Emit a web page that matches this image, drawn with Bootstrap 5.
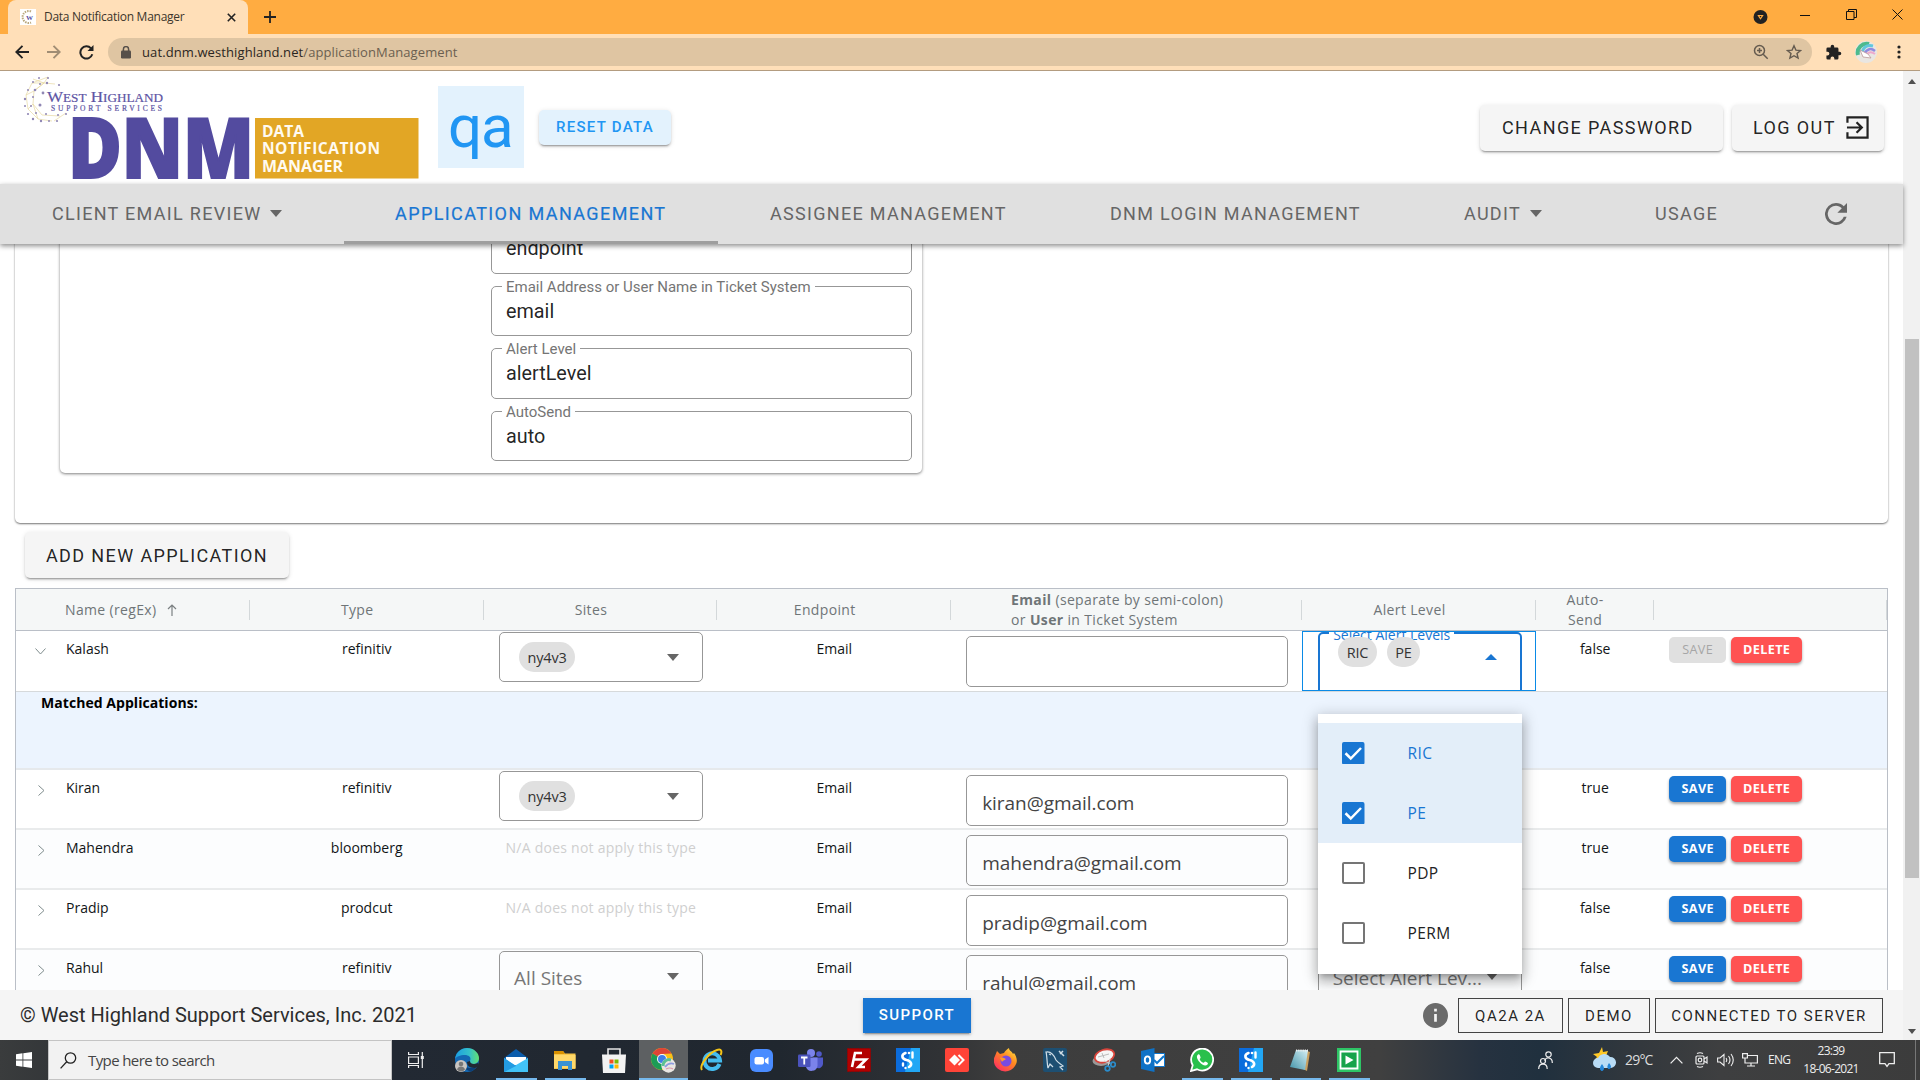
<!DOCTYPE html>
<html lang="en">
<head>
<meta charset="utf-8">
<title>Data Notification Manager</title>
<link href="https://cdn.jsdelivr.net/npm/bootstrap@5.3.0/dist/css/bootstrap.min.css" rel="stylesheet">
<style>
body{height:1080px;overflow:hidden;font-family:Roboto,sans-serif;background:#fff;color:rgba(0,0,0,.87);line-height:1.2}
svg{display:block;flex-shrink:0}
.ui-sans{font-family:"Open Sans","Noto Sans",sans-serif}
/* browser chrome */
.tabstrip{height:34px;background:#ffac41;padding-left:8px}
.tabitem{width:240px;height:34px;background:#ffdfb8;border-radius:8px 8px 0 0;padding:0 12px;font-size:12px;letter-spacing:-.27px;color:#3c352b}
.toolbar{height:37px;background:#ffdfb8;border-bottom:1px solid #b39c80}
.omni{height:28px;margin-left:14px;width:1704px;border-radius:14px;background:#dfc5a2;padding:0 12px 0 12px;font-size:13px;color:#6b5f50;letter-spacing:.1px}
/* application header */
.page{width:1903px}
.apphead{height:113px}
.qabox{width:86px;height:82px;background:#e3f2fd;color:#2196f3;font-size:60px;line-height:81px;letter-spacing:-1px;margin:-2px 0 0 8px;padding-left:10px}
.mbtn{border:0;border-radius:5px;background:#f5f5f5;color:rgba(0,0,0,.87);font-weight:400;font-size:18px;letter-spacing:1.4px;white-space:nowrap;box-shadow:0 3px 1px -2px rgba(0,0,0,.2),0 2px 2px rgba(0,0,0,.14),0 1px 5px rgba(0,0,0,.12);line-height:1}
.reset{width:132px;height:35px;background:#e3f2fd;color:#2196f3;font-size:15px;margin-left:15px;font-weight:500;letter-spacing:1.27px}
.appnav{height:60px;background:#e0e0e0;position:relative;z-index:3;box-shadow:0 2px 5px rgba(0,0,0,.45)}
.ntab{height:60px;padding-left:52px;font-size:18px;letter-spacing:1.3px;color:#666;white-space:nowrap;border-bottom:3px solid transparent;padding-top:2px}
.ntab.on{color:#1976d2;letter-spacing:1.4px;border-color:#9e9e9e;-webkit-text-stroke:.2px #1976d2;padding-left:51px}
.caret-d,.caret-u{width:0;height:0;border-left:6px solid transparent;border-right:6px solid transparent}
.caret-d{border-top:7px solid #666}
.caret-u{border-bottom:6px solid #1976d2}
/* content */
.content{height:746px;overflow:hidden;position:relative}
.outer{margin:-44px 15px 0;height:323px;border-radius:5px;background:#fff;box-shadow:0 1px 2px rgba(0,0,0,.55)}
.inner{margin-left:45px;width:862px;height:273px;border-radius:5px;box-shadow:0 1px 3px rgba(0,0,0,.5);padding:23px 10px 0 431px;gap:12px}
.field{height:50.6px;border:1px solid #979797;border-radius:5px;padding:12px 0 0 14px;font-size:19.8px;line-height:26px;position:relative;width:421px}
.flabel{position:absolute;top:-10px;left:10px;background:#fff;padding:0 4px;font-size:15px;line-height:20px;color:#757575}
.addbtn{width:264px;height:46px;margin:9px 0 10px 25px;padding-top:3px}
/* data grid */
.dgrid{margin:0 15px;border:1px solid #babfc7;border-bottom:0;font-size:14px;width:1873px;color:#111517}
.dhead{height:42px;background:#f5f7f7;color:#6f7577;border-bottom:1px solid #babfc7;letter-spacing:.35px;line-height:20px}
.dhead>div{position:relative;display:flex;align-items:center;height:41px}
.dhead>div::after{content:"";position:absolute;right:0;top:11px;height:20px;width:1px;background:#d3d8da}
.c1,.c2,.c3,.c4{width:233.8px}.c5{width:351px}.c6{width:234px}.c7{width:118px}.c8{width:233px}
.drow{height:60px;border-bottom:2px solid #e9ebec;line-height:20px}
.drow>div{padding-top:8px;flex-shrink:0}
.drow.first{height:61px;border-bottom:1px solid #d6d9db}
.drow.odd{background:#fcfdfe}
.detail{height:78px;background:#ecf4fe;border-bottom:2px solid #e6e9ec;padding:1px 0 0 25px;font-weight:700;line-height:20px;color:#000;letter-spacing:.05px}
.selbox{width:204px;height:50px;border:1px solid #979797;border-radius:5px;margin-left:15.5px;padding:0 23px 0 19px;background:#fff}
.odd .selbox,.odd .inbox{background:#fcfdfe}
.chipx{height:30px;border-radius:15px;background:#e0e0e0;padding:0 8.500px;line-height:31px;font-size:14.5px;letter-spacing:-.2px;color:#333}
.inbox{width:322px;height:51px;border:1px solid #979797;border-radius:5px;margin-left:15px;padding:15px 0 0 15px;font-size:19px;line-height:24px;letter-spacing:-.05px;color:#444;background:#fff}
.drow>.p1{padding-top:1px}.drow>.p5{padding-top:5px}.drow>.p6{padding-top:6px}
.na{color:#cfcfcf;letter-spacing:.24px;padding-left:22px}
.abtn{height:25.5px;border:0;border-radius:5px;color:#fff;font-size:12.6px;font-weight:700;line-height:1;padding:1px 0 0;letter-spacing:.4px;box-shadow:0 2px 3px rgba(0,0,0,.35)}
.asave{width:57px;background:#1976d2;margin-left:15px}.adel{width:71px;background:#ff5252;margin-left:5px}
.asave.off{background:#e0e0e0;color:#a6a6a6;box-shadow:none;font-weight:400}
.focuscell{border:1px solid #0a8ae6;height:60px;width:234px;overflow:hidden}
.alertbox{position:relative;width:204px;height:70px;margin-left:15px;border:2px solid #1976d2;border-radius:5px}
.alabel{position:absolute;left:9px;top:-9px;background:#fff;padding:0 4px;font-size:14px;line-height:20px;color:#1976d2;white-space:nowrap}
.menu{position:absolute;left:1318px;top:470px;width:204px;height:260px;background:#fff;box-shadow:0 5px 5px -3px rgba(0,0,0,.2),0 8px 10px 1px rgba(0,0,0,.14),0 3px 14px 2px rgba(0,0,0,.2);padding-top:9px;z-index:2;font-size:15.5px;letter-spacing:.4px;color:#222}
.mitem{height:60px;padding-left:24px;gap:43px}
.mitem.sel{background:#e3eef9;color:#1976d2}
.cbx{width:22.5px;height:22.5px;border:2px solid #757575;border-radius:2px}
/* footer */
.foot{height:50px;background:#f5f5f5;padding:0 20px}
.support{position:absolute;left:863px;top:8px;width:108px;height:35px;border-radius:0;background:#1976d2;color:#fff;font-size:15px;letter-spacing:1.4px;font-weight:500}
.fbtn{height:35px;border:1px solid #222;outline:.5px solid #444;outline-offset:-1px;font-size:15px;font-weight:400;letter-spacing:1.5px;line-height:34px;text-align:center}
.track{width:17px;background:#f1f1f1;padding:8px 2px 9px}
.thumb{background:#c1c1c1;height:539px;margin-top:255px;width:14px}
/* taskbar */
.task{height:40px;background:linear-gradient(90deg,#3a3c3d 0,#343739 48px,#222933 392px,#20272f 780px,#303235 940px,#3d3d3d 1000px,#404040 1380px,#263240 1480px,#20303e 1540px,#33383d 1640px,#3e3f40 1720px,#3c3c3c 1920px);color:#eee}
.tsearch{width:344px;height:40px;background:#f2f2f2;border:1px solid #c4c4c4;color:#444;font-size:15px;letter-spacing:-.6px;padding-left:11px}
.tico{width:49px;height:40px}
.tico.run{border-bottom:2px solid #76b9ed;width:41px;margin:0 4px;padding-top:2px}
.tico.act{border-bottom:2px solid #76b9ed;background:#5d6062;padding-top:2px}
</style>
<script src="https://cdn.jsdelivr.net/npm/bootstrap@5.3.0/dist/js/bootstrap.bundle.min.js"></script>
</head>
<body class="d-flex flex-column">

<div class="tabstrip d-flex align-items-center ui-sans">
  <div class="tabitem d-flex align-items-center">
    <svg width="16" height="16" viewBox="0 0 16 16"><rect width="16" height="16" fill="#fff"/><path d="M11 2.5A6 6 0 1 0 11 13.5" fill="none" stroke="#b9a77c" stroke-width="2" stroke-dasharray="1.5 1"/><text x="6" y="10.5" font-size="7" font-family="Liberation Serif" font-weight="700" fill="#534a9f">W</text></svg>
    <span class="ms-2 flex-fill text-nowrap">Data Notification Manager</span>
    <svg width="9" height="9" viewBox="0 0 9 9" stroke="#222" stroke-width="1.6"><path d="M.8.8l7.4 7.4M8.2.8L.8 8.2"/></svg>
  </div>
  <svg class="ms-3" width="12" height="12" viewBox="0 0 12 12" stroke="#222" stroke-width="1.8"><path d="M6 0v12M0 6h12"/></svg>
  <div class="ms-auto d-flex align-items-center" style="padding:0 17px 5px 0">
    <svg width="15" height="14" viewBox="0 0 14 14" style="margin:5px 32px 0 0"><circle cx="7" cy="7" r="7" fill="#222"/><path d="M3.8 5h6.4L7 9.8z" fill="#ffac41"/><path d="M6 6h2L7 7.8z" fill="#222"/></svg>
    <svg width="10" height="10" viewBox="0 0 10 10" class="me-4" stroke="#111"><path d="M0 5.500h10" /></svg>
    <svg width="11" height="11" viewBox="0 0 11 11" fill="none" stroke="#111" style="margin:0 35px 0 12px"><path d="M.5 2.5h7.5v8H.5zM2.5 2.5V.5h8v8H8"/></svg>
    <svg width="11" height="11" viewBox="0 0 11 11" stroke="#111"><path d="M.5.5l10 10M10.500.5l-10 10"/></svg>
  </div>
</div>
<div class="toolbar d-flex align-items-center ui-sans">
  <svg width="14" height="14" viewBox="0 0 14 14" fill="none" stroke="#222" stroke-width="1.9" style="margin-left:15px"><path d="M14 7H1.500M7.500 .8L1.300 7l6.200 6.200"/></svg>
  <svg width="14" height="14" viewBox="0 0 14 14" fill="none" stroke="#a08d74" stroke-width="1.9" style="margin-left:18px"><path d="M0 7h12.500M6.500 .8L12.700 7l-6.200 6.200"/></svg>
  <svg width="15" height="15" viewBox="0 0 15 15" fill="none" stroke="#222" stroke-width="2" style="margin-left:18px"><path d="M13.300 9.300A6.100 6.100 0 1 1 12 3.300"/><path d="M14.500 0v6h-6z" fill="#222" stroke="none"/></svg>
  <div class="omni d-flex align-items-center">
    <svg width="10" height="13" viewBox="0 0 10 13" style="margin-left:1px"><rect y="4.500" width="10" height="8" rx="1.200" fill="#57504a"/><path d="M2.400 5V3.200a2.600 2.600 0 0 1 5.200 0V5" fill="none" stroke="#57504a" stroke-width="1.500"/></svg>
    <span class="text-nowrap" style="margin-left:11px;padding-top:1px"><span style="color:#2b2621">uat.dnm.westhighland.net</span>/applicationManagement</span>
    <svg class="ms-auto" width="16" height="16" viewBox="0 0 16 16" fill="none" stroke="#655b4f" stroke-width="1.500"><circle cx="6.500" cy="6.500" r="5"/><path d="M10.200 10.200l4.500 4.500M6.500 4v5M4 6.500h5"/></svg>
    <svg width="16" height="16" viewBox="0 0 16 16" fill="none" stroke="#655b4f" stroke-width="1.400" style="margin:0 -2px 0 17px"><path d="M8 1.800l1.900 4.300 4.600.4-3.500 3 1.100 4.600L8 11.700l-4.100 2.400L5 9.500l-3.500-3 4.600-.4z"/></svg>
  </div>
  <svg width="17" height="17" viewBox="0 0 24 24" fill="#222" style="margin-left:13px"><path d="M20.500 11H19V7a2 2 0 0 0-2-2h-4V3.500a2.500 2.500 0 0 0-5 0V5H4a2 2 0 0 0-2 2v3.800h1.500a2.700 2.700 0 0 1 0 5.400H2V20a2 2 0 0 0 2 2h3.800v-1.500a2.700 2.700 0 0 1 5.400 0V22H17a2 2 0 0 0 2-2v-4h1.500a2.500 2.500 0 0 0 0-5z"/></svg>
  <svg width="22" height="22" viewBox="0 0 22 22" style="margin-left:13px"><circle cx="11" cy="11" r="11" fill="#e9e6e2"/><path d="M3 14A9 9 0 0 1 14 3" fill="none" stroke="#4dba8e" stroke-width="4"/><path d="M7 11q3-8 11-6" fill="none" stroke="#62c7dd" stroke-width="3"/><path d="M9 13q5-8 11-3" fill="none" stroke="#8f8be0" stroke-width="2.500"/><path d="M11 14q4-5 9-1" fill="none" stroke="#eea8cc" stroke-width="2"/><path d="M5 9l3 7 8 1-3-4z" fill="#fff" stroke="#b99" stroke-width=".8"/></svg>
  <svg width="4" height="14" viewBox="0 0 4 14" fill="#222" style="margin-left:20px"><circle cx="2" cy="2" r="1.600"/><circle cx="2" cy="7" r="1.600"/><circle cx="2" cy="12" r="1.600"/></svg>
</div>

<div class="d-flex" style="height:969px">
 <div class="page d-flex flex-column position-relative">
  <header class="apphead d-flex align-items-center">
    <svg width="430" height="113" viewBox="0 0 430 113">
      <g fill="none" stroke="#e6d9a2" stroke-width=".7"><path d="M48 6L32 12 26 24 28 38 38 48 52 50M55 13L44 12 34 20 33 33 42 44 60 45M66 42L54 50M32 12l12 0-10 8M26 24l8-4M28 38l5-5 5 15M33 8l11 4 4-6"/></g>
      <g fill="#9087b4"><circle cx="48" cy="7" r="1"/><circle cx="39" cy="7" r="1"/><circle cx="33" cy="11" r="1"/><circle cx="59" cy="14" r="1.100"/><circle cx="47" cy="12" r="1.200"/><circle cx="40" cy="13" r="1"/><circle cx="28" cy="19" r="1"/><circle cx="35" cy="19" r="1.300"/><circle cx="25" cy="28" r="1.200"/><circle cx="33" cy="26" r="1"/><circle cx="43" cy="22" r="1.400"/><circle cx="25" cy="35" r="1"/><circle cx="31" cy="35" r="1"/><circle cx="40" cy="34" r="1.500"/><circle cx="28" cy="43" r="1.100"/><circle cx="36" cy="42" r="1"/><circle cx="33" cy="48" r="1.200"/><circle cx="41" cy="50" r="1.200"/><circle cx="49" cy="50" r="1"/><circle cx="46" cy="43" r="1"/><circle cx="57" cy="50" r="1.100"/><circle cx="58" cy="44" r="1"/><circle cx="66" cy="43" r="1"/></g>
      <g font-family="Liberation Serif,serif" fill="#5d54a4" stroke="#5d54a4" stroke-width=".2"><text x="47" y="31" font-size="15.500" textLength="116" lengthAdjust="spacingAndGlyphs">W<tspan font-size="12">EST</tspan> H<tspan font-size="12">IGHLAND</tspan></text><text x="51" y="39.500" font-size="7.500" textLength="111">SUPPORT SERVICES</text></g>
      <text x="68" y="107" font-family="Open Sans,sans-serif" font-weight="800" font-size="83" fill="#534b9f" stroke="#534b9f" stroke-width="2" textLength="186" lengthAdjust="spacingAndGlyphs">DNM</text>
      <rect x="255" y="47" width="163.500" height="60.500" fill="#e2a625"/>
      <g font-family="Open Sans,sans-serif" font-weight="700" font-size="15.500" fill="#fffaf0"><text x="262" y="65.500" textLength="42" lengthAdjust="spacingAndGlyphs">DATA</text><text x="262" y="83" textLength="118">NOTIFICATION</text><text x="262" y="101" textLength="81" lengthAdjust="spacingAndGlyphs">MANAGER</text></g>
    </svg>
    <div class="qabox">qa</div>
    <button class="mbtn reset">RESET DATA</button>
    <button class="mbtn ms-auto text-start" style="width:243px;height:46px;padding-left:22px">CHANGE PASSWORD</button>
    <button class="mbtn d-flex align-items-center" style="width:152px;height:46px;margin:0 19px 0 9px;padding-left:21px">LOG OUT
      <svg width="23" height="23" viewBox="0 0 24 24" fill="none" stroke="#222" stroke-width="2.300" style="margin-left:10px"><path d="M1.500 7V1.500h21v21h-21V17"/><path d="M1 12h14M11 6.500l5.500 5.500-5.500 5.500"/></svg></button>
  </header>

  <nav class="appnav d-flex">
    <div class="ntab d-flex align-items-center" style="width:344px">CLIENT EMAIL REVIEW<span class="caret-d" style="margin-left:9px"></span></div>
    <div class="ntab on d-flex align-items-center" style="width:374px">APPLICATION MANAGEMENT</div>
    <div class="ntab d-flex align-items-center" style="width:340px">ASSIGNEE MANAGEMENT</div>
    <div class="ntab d-flex align-items-center" style="width:354px">DNM LOGIN MANAGEMENT</div>
    <div class="ntab d-flex align-items-center" style="width:191px">AUDIT<span class="caret-d" style="margin-left:9px"></span></div>
    <div class="ntab d-flex align-items-center" style="width:222px">USAGE</div>
    <svg width="22" height="22" viewBox="4 4 16 16" fill="#666" style="margin:19px 0 0"><path d="M17.650 6.350A7.960 7.960 0 0 0 12 4a8 8 0 1 0 7.730 10h-2.080A6 6 0 1 1 12 6c1.660 0 3.140.69 4.220 1.780L13 11h7V4z"/></svg>
  </nav>

  <main class="content">
    <section class="outer">
      <div class="inner d-flex flex-column">
        <div class="field">endpoint</div>
        <div class="field"><span class="flabel">Email Address or User Name in Ticket System</span>email</div>
        <div class="field"><span class="flabel">Alert Level</span>alertLevel</div>
        <div class="field"><span class="flabel">AutoSend</span>auto</div>
      </div>
    </section>
    <button class="mbtn addbtn d-block">ADD NEW APPLICATION</button>

    <section class="dgrid ui-sans">
      <div class="dhead d-flex">
        <div class="c1" style="padding-left:49px">Name (regEx)<svg width="10" height="12" viewBox="0 0 10 12" fill="none" stroke="#7b8082" stroke-width="1.200" style="margin-left:10px"><path d="M5 12V1M1 5l4-4 4 4"/></svg></div>
        <div class="c2 justify-content-center" style="padding-right:19px">Type</div>
        <div class="c3 justify-content-center" style="padding-right:19px">Sites</div>
        <div class="c4 justify-content-center" style="padding-right:19px">Endpoint</div>
        <div class="c5" style="padding-left:60px"><span><b>Email</b> (separate by semi-colon)<br>or <b>User</b> in Ticket System</span></div>
        <div class="c6 justify-content-center" style="padding-right:19px">Alert Level</div>
        <div class="c7 justify-content-center text-center" style="padding-right:20px">Auto-<br>Send</div>
        <div class="c8"></div>
      </div>

      <div class="drow first d-flex">
        <div class="c1 d-flex" style="padding-left:19px"><svg width="11" height="7" viewBox="0 0 11 7" fill="none" stroke="#7f8c8d" style="margin:9px 20px 0 0"><path d="M.5.500l5 5.500 5-5.500"/></svg>Kalash</div>
        <div class="c2 text-center">refinitiv</div>
        <div class="c3 p1"><div class="selbox d-flex align-items-center justify-content-between"><span class="chipx">ny4v3</span><span class="caret-d"></span></div></div>
        <div class="c4 text-center">Email</div>
        <div class="c5 p5"><div class="inbox"></div></div>
        <div class="c6 focuscell pt-0"><div class="alertbox"><span class="alabel">Select Alert Levels</span>
          <div class="d-flex position-relative" style="padding:3px 23px 0 18px"><span class="chipx">RIC</span><span class="chipx" style="margin-left:10px">PE</span><span class="caret-u ms-auto" style="margin-top:17px"></span></div></div></div>
        <div class="c7 text-center">false</div>
        <div class="c8 p6 d-flex"><button class="abtn asave off">SAVE</button><button class="abtn adel">DELETE</button></div>
      </div>
      <div class="detail">Matched Applications:</div>

      <div class="drow d-flex">
        <div class="c1 d-flex" style="padding-left:22px"><svg width="7" height="11" viewBox="0 0 7 11" fill="none" stroke="#7f8c8d" style="margin:7px 21px 0 0"><path d="M.5.500l5.500 5-5.500 5"/></svg>Kiran</div>
        <div class="c2 text-center">refinitiv</div>
        <div class="c3 p1"><div class="selbox d-flex align-items-center justify-content-between"><span class="chipx">ny4v3</span><span class="caret-d"></span></div></div>
        <div class="c4 text-center">Email</div>
        <div class="c5 p5"><div class="inbox">kiran@gmail.com</div></div>
        <div class="c6"></div>
        <div class="c7 text-center">true</div>
        <div class="c8 p6 d-flex"><button class="abtn asave">SAVE</button><button class="abtn adel">DELETE</button></div>
      </div>
      <div class="drow odd d-flex">
        <div class="c1 d-flex" style="padding-left:22px"><svg width="7" height="11" viewBox="0 0 7 11" fill="none" stroke="#7f8c8d" style="margin:7px 21px 0 0"><path d="M.5.500l5.500 5-5.500 5"/></svg>Mahendra</div>
        <div class="c2 text-center">bloomberg</div>
        <div class="c3 na">N/A does not apply this type</div>
        <div class="c4 text-center">Email</div>
        <div class="c5 p5"><div class="inbox">mahendra@gmail.com</div></div>
        <div class="c6"></div>
        <div class="c7 text-center">true</div>
        <div class="c8 p6 d-flex"><button class="abtn asave">SAVE</button><button class="abtn adel">DELETE</button></div>
      </div>
      <div class="drow d-flex">
        <div class="c1 d-flex" style="padding-left:22px"><svg width="7" height="11" viewBox="0 0 7 11" fill="none" stroke="#7f8c8d" style="margin:7px 21px 0 0"><path d="M.5.500l5.500 5-5.500 5"/></svg>Pradip</div>
        <div class="c2 text-center">prodcut</div>
        <div class="c3 na">N/A does not apply this type</div>
        <div class="c4 text-center">Email</div>
        <div class="c5 p5"><div class="inbox">pradip@gmail.com</div></div>
        <div class="c6"></div>
        <div class="c7 text-center">false</div>
        <div class="c8 p6 d-flex"><button class="abtn asave">SAVE</button><button class="abtn adel">DELETE</button></div>
      </div>
      <div class="drow odd d-flex">
        <div class="c1 d-flex" style="padding-left:22px"><svg width="7" height="11" viewBox="0 0 7 11" fill="none" stroke="#7f8c8d" style="margin:7px 21px 0 0"><path d="M.5.500l5.500 5-5.500 5"/></svg>Rahul</div>
        <div class="c2 text-center">refinitiv</div>
        <div class="c3 p1"><div class="selbox d-flex align-items-center justify-content-between" style="padding-left:14px;font-size:19px;color:#777"><span style="padding-top:3px">All Sites</span><span class="caret-d"></span></div></div>
        <div class="c4 text-center">Email</div>
        <div class="c5 p5"><div class="inbox">rahul@gmail.com</div></div>
        <div class="c6 p1"><div class="selbox d-flex align-items-center justify-content-between text-nowrap" style="padding-left:14px;font-size:19px;color:#777"><span style="padding-top:3px">Select Alert Lev...</span><span class="caret-d"></span></div></div>
        <div class="c7 text-center">false</div>
        <div class="c8 p6 d-flex"><button class="abtn asave">SAVE</button><button class="abtn adel">DELETE</button></div>
      </div>
    </section>

    <div class="menu ui-sans">
      <div class="mitem sel d-flex align-items-center"><svg width="22.500" height="22.500" viewBox="0 0 18 18"><rect width="18" height="18" rx="1.500" fill="#1976d2"/><path d="M2.800 9l4.200 4.200 8.200-8.400" fill="none" stroke="#fff" stroke-width="2"/></svg>RIC</div>
      <div class="mitem sel d-flex align-items-center"><svg width="22.500" height="22.500" viewBox="0 0 18 18"><rect width="18" height="18" rx="1.500" fill="#1976d2"/><path d="M2.800 9l4.200 4.200 8.200-8.400" fill="none" stroke="#fff" stroke-width="2"/></svg>PE</div>
      <div class="mitem d-flex align-items-center"><span class="cbx"></span>PDP</div>
      <div class="mitem d-flex align-items-center"><span class="cbx"></span>PERM</div>
    </div>
  </main>

  <footer class="foot d-flex align-items-center position-relative">
    <span style="font-size:20px;color:#2c2c2c">© West Highland Support Services, Inc. 2021</span>
    <button class="mbtn support">SUPPORT</button>
    <svg class="ms-auto" width="25" height="25" viewBox="0 0 24 24" fill="#6b6b6b"><path d="M12 0a12 12 0 1 0 0 24 12 12 0 0 0 0-24zm1.300 18h-2.600v-7.500h2.600zm0-9.800h-2.600V5.600h2.600z"/></svg>
    <span class="fbtn" style="width:105px;margin-left:10px">QA2A 2A</span>
    <span class="fbtn" style="width:82px;margin-left:5px">DEMO</span>
    <span class="fbtn" style="width:228px;margin-left:5px">CONNECTED TO SERVER</span>
  </footer>
 </div>
 <div class="track d-flex flex-column align-items-center">
   <span style="width:0;height:0;border:4px solid transparent;border-top:0;border-bottom:5px solid #505050"></span>
   <div class="thumb"></div>
   <span class="mt-auto" style="width:0;height:0;border:4px solid transparent;border-bottom:0;border-top:5px solid #505050;margin-bottom:-3px"></span>
 </div>
</div>

<div class="task d-flex ui-sans">
  <div class="d-flex align-items-center" style="width:48px;padding-left:16px"><svg width="16" height="16" viewBox="0 0 16 16" fill="#fff"><path d="M0 2.200L6.500 1.300v6.300H0zM7.300 1.200L16 0v7.600H7.300zM0 8.400h6.500v6.300L0 13.800zM7.300 8.400H16V16l-8.700-1.200z"/></svg></div>
  <div class="tsearch d-flex align-items-center"><svg width="17" height="17" viewBox="0 0 17 17" fill="none" stroke="#222" stroke-width="1.300"><circle cx="10.500" cy="6" r="5.200"/><path d="M6.700 9.800L.6 16.400"/></svg><span style="margin-left:11px">Type here to search</span></div>
  <div class="d-flex align-items-center" style="width:50.500px;padding-left:16px"><svg width="16" height="16" viewBox="0 0 16 16" fill="none" stroke="#eee" stroke-width="1.200"><path d="M.6 5h9.800v6.500H.6zM.6 0v2.500h9.800V0M.6 16v-2.500h9.800V16M14.300 0v16"/><path d="M12.800 4h3v3h-3z" fill="#eee" stroke="none"/></svg></div>
  <div class="tico d-flex align-items-center justify-content-center"><svg width="24" height="24" viewBox="0 0 24 24"><defs><linearGradient id="ed" x1="0" x2="1"><stop offset="0" stop-color="#1b9de2"/><stop offset=".6" stop-color="#35c1c9"/><stop offset="1" stop-color="#63e070"/></linearGradient></defs><circle cx="12" cy="12" r="12" fill="#1468b3"/><path d="M0 11C1 4 6 0 12 0c7 0 12 5 12 10 0 4-3 6-6 6-3 0-4-1-3-3 2-4-2-6-5-6C5 7 1 9 0 11z" fill="url(#ed)"/><path d="M9 13c-1 5 4 9 12 6-1 2-3 4-5 4.500C9 22 8 17 9 13z" fill="#0c3f78"/><path d="M15 13c0 3 4 4 8 2l1 3-4 2c-6 0-8-3-8-6z" fill="#222933"/><circle cx="6" cy="18" r="6" fill="#c9c5c1"/><circle cx="6" cy="16" r="2.300" fill="#777"/><path d="M2 21.500c1-4 7-4 8 0-2 2.500-6 2.500-8 0z" fill="#777"/></svg></div>
  <div class="tico run d-flex align-items-center justify-content-center"><svg width="24" height="23" viewBox="0 0 24 23"><path d="M0 9L12 0l12 9v14H0z" fill="#0b5cab"/><path d="M2 8h20v8H2z" fill="#fff"/><path d="M0 9l12 8-12 6z" fill="#2ea3e8"/><path d="M24 9L0 23h24z" fill="#42c3f7"/><path d="M0 9l12 8L0 23z" fill="#239be2"/></svg></div>
  <div class="tico run d-flex align-items-center justify-content-center"><svg width="22" height="19" viewBox="0 0 22 19"><path d="M0 0h9l2 2.500h10.500V18H0z" fill="#f7c64a"/><path d="M0 0h9l2 3H0z" fill="#d99100"/><path d="M0 4h21.500v13H0z" fill="#ffd86a"/><path d="M4 10h14v9h-4v-4H8v4H4z" fill="#3a92d3"/></svg></div>
  <div class="tico d-flex align-items-center justify-content-center"><svg width="24" height="25" viewBox="0 0 24 25"><path d="M6 8V1h12v7" fill="none" stroke="#e5e5e5" stroke-width="1.600"/><path d="M0 6.500h24L23 25H1z" fill="#f3f3f3"/><path d="M7.500 11.500h4v4h-4z" fill="#f25022"/><path d="M12.500 11.500h4v4h-4z" fill="#7fba00"/><path d="M7.500 16.500h4v4h-4z" fill="#00a4ef"/><path d="M12.500 16.500h4v4h-4z" fill="#ffb900"/></svg></div>
  <div class="tico act d-flex align-items-center justify-content-center"><svg width="25" height="25" viewBox="0 0 25 25"><circle cx="11" cy="11" r="11" fill="#fbc116"/><path d="M11 11L1.500 5.500A11 11 0 0 1 20.500 5.500L11 6z" fill="#dd4437"/><path d="M1.500 5.500L11 11v11A11 11 0 0 1 1.500 5.500z" fill="#1c9c56"/><circle cx="11" cy="11" r="5" fill="#fff"/><circle cx="11" cy="11" r="4" fill="#3f7fe8"/><circle cx="17.500" cy="17.500" r="7.200" fill="#e9e6e2"/><path d="M12 18a6 6 0 0 1 8-6" fill="none" stroke="#5bc095" stroke-width="3"/><path d="M14 19q4-5 9-3" fill="none" stroke="#8d9be0" stroke-width="1.800"/><path d="M15 21q4-2 7 0" fill="none" stroke="#d9a" stroke-width="1.200"/></svg></div>
  <div class="tico d-flex align-items-center justify-content-center"><svg width="24" height="24" viewBox="0 0 24 24" fill="none"><path d="M19.500 16A7.800 7.800 0 1 1 20 12.500H8" stroke="#45bdf0" stroke-width="4"/><path d="M2 22C-1 18 8 5 17 2c5-1.500 5 2 3.500 5" stroke="#f5c518" stroke-width="2"/></svg></div>
  <div class="tico d-flex align-items-center justify-content-center"><svg width="23" height="23" viewBox="0 0 23 23"><rect width="23" height="23" rx="6" fill="#4a8cff"/><rect x="4.500" y="8" width="9.500" height="7.500" rx="2" fill="#fff"/><path d="M14.800 10.500l3.700-2.500v7.500l-3.700-2.500z" fill="#fff"/></svg></div>
  <div class="tico d-flex align-items-center justify-content-center"><svg width="25" height="23" viewBox="0 0 25 23"><circle cx="13" cy="4" r="4" fill="#7b83eb"/><circle cx="21" cy="5" r="2.800" fill="#5059c9"/><path d="M15 8.500h10V15a4.500 4.500 0 0 1-7 3.500z" fill="#5059c9"/><path d="M8 8.500h11.500V17a6 6 0 0 1-11.500 1z" fill="#7b83eb"/><rect y="5.500" width="12.500" height="12.500" rx="1.200" fill="#4b53bc"/><path d="M3 8.500h6.500M6.250 8.500v7" stroke="#fff" stroke-width="1.800"/></svg></div>
  <div class="tico d-flex align-items-center justify-content-center"><svg width="24" height="24" viewBox="0 0 24 24"><rect x=".5" y=".5" width="23" height="23" fill="#b30000" stroke="#900" stroke-dasharray="1.500 1"/><path d="M5 19L8 5h7M6.500 11.500H13M11.500 11.500H19L11.500 19H18" fill="none" stroke="#fff" stroke-width="2.600"/></svg></div>
  <div class="tico d-flex align-items-center justify-content-center"><svg width="24" height="24" viewBox="0 0 24 24"><path d="M0 0h24v24H0z" fill="#0b6cdc"/><path d="M15 0h9v24H9z" fill="#22a7f5"/><path d="M9.500 5C4.500 7 6 11 10.500 12s6.500 4.500 2.500 7" fill="none" stroke="#fff" stroke-width="2.600" stroke-linecap="round"/><path d="M16.500 4.500v5M7 15.500v2" stroke="#fff" stroke-width="2.400" stroke-linecap="round"/><circle cx="13" cy="5" r="1.300" fill="#fff"/><circle cx="9.500" cy="20" r="1.200" fill="#fff"/></svg></div>
  <div class="tico d-flex align-items-center justify-content-center"><svg width="24" height="24" viewBox="0 0 24 24"><rect width="24" height="24" rx="2" fill="#ff4438"/><path d="M9.500 6.500L15 12l-5.500 5.500L4 12z" fill="#fff"/><path d="M13.500 7l5 5-5 5" fill="none" stroke="#fff" stroke-width="2"/></svg></div>
  <div class="tico d-flex align-items-center justify-content-center"><svg width="24" height="24" viewBox="0 0 24 24"><defs><linearGradient id="ff" x1="1" y1="0" x2=".2" y2="1"><stop offset="0" stop-color="#fff04a"/><stop offset=".45" stop-color="#ff8a1f"/><stop offset="1" stop-color="#ff2a64"/></linearGradient></defs><path d="M3 3l3 3 4-1c1-2 3-4 5-5 0 3 3 3 4 6l1-1c3 4 4 9 1 13-3 5-10 7-15 4C1 20-2 13 1 8z" fill="url(#ff)"/><circle cx="12" cy="13" r="5.500" fill="#7a4be0"/><path d="M6 10c2-1 4 0 6 1-2 2-3 1-4 3z" fill="#ff9a2a"/></svg></div>
  <div class="tico d-flex align-items-center justify-content-center"><svg width="24" height="24" viewBox="0 0 24 24"><rect width="24" height="24" rx="2" fill="#1d4f72"/><path d="M5 20C4 16 4 7 3 4c5-1 8 3 10 8 2 3 5 4 7 6l-3 1 3 3M6 6l2 1M5 20l2-4 3 3" fill="none" stroke="#cfdde6" stroke-width="1.200"/><path d="M16 3l5 5M17 6l3-3" stroke="#cfdde6" stroke-width="1.500"/></svg></div>
  <div class="tico d-flex align-items-center justify-content-center"><svg width="24" height="24" viewBox="0 0 24 24" fill="none"><ellipse cx="9" cy="13" rx="8.500" ry="5" fill="#999"/><ellipse cx="12.500" cy="8" rx="10" ry="6.300" transform="rotate(-18 12.500 8)" fill="#f6f6f6" stroke="#d8453c" stroke-width="1.800"/><path d="M6 9l11-3M10 5l2 5" stroke="#bbb"/><path d="M12 13l8 3M18 11l-2 7" stroke="#ccc" stroke-width="1.300"/><circle cx="15.500" cy="20.500" r="2.300" stroke="#2b8ccb" stroke-width="1.700"/><circle cx="21" cy="16.500" r="2.300" stroke="#2b8ccb" stroke-width="1.700"/></svg></div>
  <div class="tico d-flex align-items-center justify-content-center"><svg width="24" height="24" viewBox="0 0 24 24"><path d="M12 5.500h11.500v13H12z" fill="#fff" stroke="#0f78d0"/><path d="M13 12l3 3 7-7" fill="none" stroke="#0f78d0" stroke-width="2"/><path d="M0 3l13.500-3v24L0 21z" fill="#0f72c6"/><ellipse cx="6.500" cy="12" rx="2.700" ry="3.600" fill="none" stroke="#fff" stroke-width="1.900"/></svg></div>
  <div class="tico run d-flex align-items-center justify-content-center"><svg width="24" height="24" viewBox="0 0 24 24"><path d="M1 23l1.700-5.800A11 11 0 1 1 7 21.300z" fill="#29c04c" stroke="#fff" stroke-width="1.800"/><path d="M8 6.500c-2 1.500-1 4.500 1.500 7.500s6 4.500 8 2.500c1-1.200.5-1.800-2.300-3-.8 0-1 1.500-1.800 1.300-1.600-.6-3-2-3.700-3.600 0-.7 1-1 .9-1.800C9.800 7 9.500 6 8 6.500z" fill="#fff"/></svg></div>
  <div class="tico run d-flex align-items-center justify-content-center"><svg width="24" height="24" viewBox="0 0 24 24"><path d="M0 0h24v24H0z" fill="#0b6cdc"/><path d="M15 0h9v24H9z" fill="#22a7f5"/><path d="M9.500 5C4.500 7 6 11 10.500 12s6.500 4.500 2.500 7" fill="none" stroke="#fff" stroke-width="2.600" stroke-linecap="round"/><path d="M16.500 4.500v5M7 15.500v2" stroke="#fff" stroke-width="2.400" stroke-linecap="round"/><circle cx="13" cy="5" r="1.300" fill="#fff"/><circle cx="9.500" cy="20" r="1.200" fill="#fff"/></svg></div>
  <div class="tico run d-flex align-items-center justify-content-center"><svg width="24" height="24" viewBox="0 0 24 24"><defs><linearGradient id="np" x1="1" y1="0" x2="0" y2="1"><stop offset="0" stop-color="#d6f0f5"/><stop offset="1" stop-color="#4293a8"/></linearGradient></defs><path d="M19 3l3 1-3 19-4-2z" fill="#c8a060"/><path d="M8 2h12l-3 20L2 19z" fill="url(#np)"/><path d="M8 2.500h12" stroke="#eee" stroke-width="2" stroke-dasharray="1.200 1"/></svg></div>
  <div class="tico run d-flex align-items-center justify-content-center"><svg width="24" height="24" viewBox="0 0 24 24"><path d="M0 0h24v24H0z" fill="#2ec566"/><path d="M3.500 3.500h17v17h-17z" fill="#17a34a" stroke="#fff" stroke-width="1.800"/><path d="M8.500 7.500l8 4.500-8 4.500z" fill="#fff"/></svg></div>

  <div class="ms-auto d-flex align-items-center" style="width:384px">
    <svg width="15" height="19" viewBox="0 0 15 19" fill="none" stroke="#eee" stroke-width="1.200" style="margin-left:2px"><circle cx="10.500" cy="3.500" r="2.700"/><path d="M7 10c0-5 7.500-4 7.300 2"/><circle cx="5" cy="10" r="2.500"/><path d="M.7 18c0-6.500 8.500-6.500 8.500 0"/></svg>
    <svg width="23" height="26" viewBox="0 0 23 26" style="margin-left:40px"><path d="M9 0l1 5 5-1-2 5 3 3-7 3-8-1 3-4-4-3 6-1z" fill="#ffc928"/><path d="M5 21a5 5 0 0 1 0-10 7 7 0 0 1 12-1 5.500 5.500 0 0 1 1 11z" fill="#b9dcf5"/><path d="M9 17c-4 5-1 7 0 7s4-2 0-7zM16 16c-3 4-1 6 0 6s4-2 0-6z" fill="#2486d8"/></svg>
    <span style="font-size:14px;letter-spacing:-.8px;width:54px;padding-left:9px;color:#ddd">29°C</span>
    <svg width="13" height="8" viewBox="0 0 13 8" fill="none" stroke="#eee" stroke-width="1.300"><path d="M.6 7.400l5.900-6 5.900 6"/></svg>
    <svg width="13" height="16" viewBox="0 0 13 16" fill="none" stroke="#eee" stroke-width="1.200" style="margin-left:12px"><rect x="1" y="4" width="8" height="8" rx="1"/><circle cx="5" cy="8" r="1.800"/><path d="M9 7l3-2v6l-3-2M2 1.500q3-1.500 6 0M2 14.500q3 1.500 6 0"/></svg>
    <svg width="17" height="14" viewBox="0 0 17 14" fill="none" stroke="#eee" stroke-width="1.100" style="margin-left:9px"><path d="M.6 5v4H3l4 3.500v-11L3 5zM9 5q1.500 2 0 4M11.500 3q3 4 0 8M14 1q4.500 6 0 12"/></svg>
    <svg width="16" height="14" viewBox="0 0 16 14" fill="none" stroke="#eee" stroke-width="1.200" style="margin-left:8px"><path d="M5 2.500h10.400v7.500H3V6M5 13h8M9 10v3M.6.600h4.800V5H.6zM3 5v5"/></svg>
    <span style="font-size:12px;letter-spacing:-.7px;margin-left:10px;width:35px">ENG</span>
    <span class="text-center" style="font-size:12px;line-height:18px;letter-spacing:-.72px;width:56px;white-space:nowrap">23:39<br>18-06-2021</span>
    <svg width="16" height="16" viewBox="0 0 16 16" fill="none" stroke="#eee" stroke-width="1.300" style="margin-left:20px"><path d="M.7.700h14.600v11H10L8 14.500 6 11.700H.7z"/></svg>
    <span class="ms-auto" style="width:1px;height:40px;background:#777;margin-right:4px"></span>
  </div>
</div>
</body>
</html>
